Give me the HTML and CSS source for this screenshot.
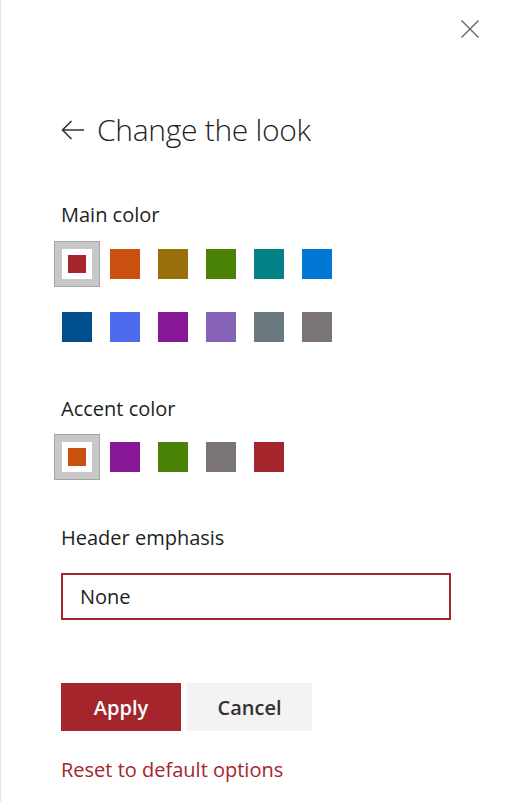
FILE: index.html
```html
<!DOCTYPE html>
<html lang="en">
<head>
<meta charset="utf-8">
<title>Change the look</title>
<link rel="stylesheet" href="styles.css">
</head>
<body>
<div class="panel">
  <div class="topbar">
    <button class="close" aria-label="Close">
      <svg width="18" height="18" viewBox="0 0 18 18"><path d="M0.5 0.5 L17.5 17.5 M17.5 0.5 L0.5 17.5" stroke="#666" stroke-width="1.4" fill="none"/></svg>
    </button>
  </div>
  <h1 class="title">
    <svg class="back" width="24" height="20" viewBox="0 0 24 20"><path d="M23 10 H1.5 M10.5 1 L1.5 10 L10.5 19" stroke="#333" stroke-width="1.6" fill="none"/></svg>
    <span>Change the look</span>
  </h1>

  <div class="label label-main">Main color</div>
  <div class="swatches">
    <div class="swatch selected"><span class="dot" style="background:#a4262c"></span></div>
    <div class="swatch" style="background:#ca5010"></div>
    <div class="swatch" style="background:#986f0b"></div>
    <div class="swatch" style="background:#498205"></div>
    <div class="swatch" style="background:#038387"></div>
    <div class="swatch" style="background:#0078d4"></div>
    <div class="swatch" style="background:#004e8c"></div>
    <div class="swatch" style="background:#4f6bed"></div>
    <div class="swatch" style="background:#881798"></div>
    <div class="swatch" style="background:#8764b8"></div>
    <div class="swatch" style="background:#69797e"></div>
    <div class="swatch" style="background:#7a7574"></div>
  </div>

  <div class="label label-accent">Accent color</div>
  <div class="swatches">
    <div class="swatch selected"><span class="dot" style="background:#ca5010"></span></div>
    <div class="swatch" style="background:#881798"></div>
    <div class="swatch" style="background:#498205"></div>
    <div class="swatch" style="background:#7a7574"></div>
    <div class="swatch" style="background:#a4262c"></div>
  </div>

  <div class="label label-header">Header emphasis</div>
  <div class="select">None</div>

  <div class="buttons">
    <button class="btn primary">Apply</button>
    <button class="btn secondary">Cancel</button>
  </div>

  <a class="reset" href="#">Reset to default options</a>
</div>
</body>
</html>
```

FILE: styles.css
```css
html, body {
  margin: 0;
  padding: 0;
  background: #ffffff;
}
body {
  font-family: "Open Sans", "Noto Sans", "Liberation Sans", sans-serif;
  color: #201f1e;
}
.panel {
  box-sizing: border-box;
  width: 508px;
  height: 802px;
  border-left: 1px solid #e6e6e6;
  padding: 20px 29px 0 60px;
  overflow: hidden;
}
.topbar {
  display: flex;
  justify-content: flex-end;
  height: 18px;
}
.close {
  border: 0;
  background: none;
  padding: 0;
  width: 18px;
  height: 18px;
  display: block;
}
.close svg { display: block; }
.title {
  margin: 74px 0 0 0;
  display: flex;
  align-items: center;
  gap: 12px;
  height: 36px;
  font-size: 30px;
  font-weight: 300;
  line-height: 36px;
  color: #201f1e;
  letter-spacing: -0.3px;
}
.back { display: block; flex: none; }
.label {
  font-size: 20px;
  line-height: 24px;
  height: 24px;
  color: #201f1e;
}
.label-main { margin-top: 55px; }
.label-accent { margin-top: 55px; }
.label-header { margin-top: 54px; }
.swatches {
  display: grid;
  grid-template-columns: repeat(6, 30px);
  column-gap: 18px;
  row-gap: 33px;
  margin-top: 22px;
  padding-left: 1px;
}
.label-accent + .swatches { margin-top: 21px; }
.swatch {
  width: 30px;
  height: 30px;
  display: flex;
  align-items: center;
  justify-content: center;
}
.swatch.selected {
  background: #ffffff;
  box-shadow: 0 0 0 7px #c8c8c8, 0 0 0 8px #a6a6a6;
}
.dot {
  width: 18px;
  height: 18px;
  display: block;
}
.select {
  box-sizing: border-box;
  margin-top: 23px;
  width: 390px;
  height: 47px;
  border: 2px solid #a4262c;
  padding: 0 0 0 17px;
  display: flex;
  align-items: center;
  font-size: 20px;
  color: #201f1e;
}
.buttons {
  display: flex;
  gap: 6px;
  margin-top: 63px;
}
.btn {
  height: 48px;
  border: 0;
  padding: 0;
  font-family: "Open Sans", "Noto Sans", "Liberation Sans", sans-serif;
  font-size: 20px;
  font-weight: 600;
}
.primary {
  width: 120px;
  background: #a4262c;
  color: #ffffff;
}
.secondary {
  width: 125px;
  background: #f3f3f3;
  color: #323130;
}
.reset {
  display: block;
  margin-top: 27px;
  font-size: 20px;
  line-height: 24px;
  color: #a4262c;
  text-decoration: none;
}
```
